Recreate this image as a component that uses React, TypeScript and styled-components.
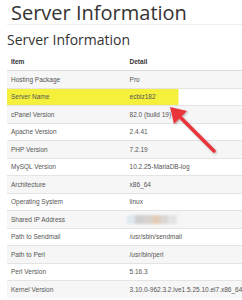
import styled, { createGlobalStyle } from "styled-components";

const rows: [string, string][] = [
  ["Hosting Package", "Pro"],
  ["Server Name", "ecbiz182"],
  ["cPanel Version", "82.0 (build 19)"],
  ["Apache Version", "2.4.41"],
  ["PHP Version", "7.2.19"],
  ["MySQL Version", "10.2.25-MariaDB-log"],
  ["Architecture", "x86_64"],
  ["Operating System", "linux"],
  ["Shared IP Address", ""],
  ["Path to Sendmail", "/usr/sbin/sendmail"],
  ["Path to Perl", "/usr/bin/perl"],
  ["Perl Version", "5.16.3"],
  ["Kernel Version", "3.10.0-962.3.2.lve1.5.25.10.el7.x86_64"],
];

// blurred-out IP address colours
const blurColors = ["#dfe8f0", "#cfd0d2", "#d6d2d0", "#e3cdb8", "#dcd6d4", "#e4e4e6"];

const App = () => {
  return (
    <Page>
      <GlobalStyle />
      <Title>Server Information</Title>
      <SubTitle>Server Information</SubTitle>
      <Table>
        <thead>
          <tr>
            <Th>Item</Th>
            <Th>Detail</Th>
          </tr>
        </thead>
        <tbody>
          {rows.map(([item, detail], i) => (
            <Row key={item} $striped={i % 2 === 0} $highlight={item === "Server Name"}>
              <Td>{item}</Td>
              <Td>
                {item === "Shared IP Address" ? (
                  <Blurred>
                    {blurColors.map((c, j) => (
                      <Swatch key={j} $color={c} />
                    ))}
                  </Blurred>
                ) : (
                  detail
                )}
              </Td>
            </Row>
          ))}
        </tbody>
      </Table>
      <Arrow width="60" height="60" viewBox="0 0 60 60">
        <defs>
          <filter id="sh" x="-30%" y="-30%" width="160%" height="160%">
            <feDropShadow dx="1" dy="1" stdDeviation="1" floodColor="#000" floodOpacity="0.3" />
          </filter>
        </defs>
        <g filter="url(#sh)">
          <line x1="49" y1="49" x2="12" y2="12" stroke="#e8363b" strokeWidth="3.5" strokeLinecap="round" />
          <polygon points="5,5 22,9 9,22" fill="#e8363b" />
        </g>
      </Arrow>
    </Page>
  );
};

const GlobalStyle = createGlobalStyle`
  body {
    margin: 0;
    background: #fff;
  }
`;

const Page = styled.div`
  position: relative;
  width: 242px;
  height: 300px;
  overflow: hidden;
  padding-left: 7px;
  box-sizing: border-box;
`;

const Title = styled.h1`
  margin: 0;
  padding: 1px 0 0 4px;
  height: 25px;
  font-family: "Open Sans", sans-serif;
  font-weight: 400;
  font-size: 20px;
  line-height: 24px;
  color: #333;
  border-bottom: 1px solid #eee;
  white-space: nowrap;
  box-sizing: border-box;
`;

const SubTitle = styled.h2`
  margin: 6px 0 0 0;
  height: 21px;
  font-family: "Open Sans", sans-serif;
  font-weight: 400;
  font-size: 14px;
  line-height: 18px;
  color: #333;
`;

const Table = styled.table`
  width: 240px;
  border-collapse: collapse;
  font-family: "Liberation Sans", Arial, sans-serif;
  font-size: 6.5px;
  color: #555;
`;

const Th = styled.th`
  text-align: left;
  font-weight: 700;
  color: #333;
  height: 18px;
  padding: 0 0 0 4px;
  border-bottom: 1px solid #ddd;
  width: 110px;
`;

const Row = styled.tr<{ $striped: boolean; $highlight: boolean }>`
  height: 17.5px;
  background: ${(p) =>
    p.$highlight
      ? "linear-gradient(to right, #f4f03c 0, #f4f03c 171px, #fff 171px)"
      : p.$striped
      ? "#f6f6f6"
      : "#fff"};
  border-top: 1px solid #e4e4e4;
`;

const Td = styled.td`
  padding: 0 0 0 4px;
  white-space: nowrap;
  vertical-align: middle;
`;

const Blurred = styled.div`
  display: flex;
  height: 9px;
  width: 50px;
  filter: blur(0.8px);
  margin-left: -3px;
`;

const Swatch = styled.span<{ $color: string }>`
  flex: 1;
  background: ${(p) => p.$color};
`;

const Arrow = styled.svg`
  position: absolute;
  left: 165px;
  top: 102px;
`;

export default App;
